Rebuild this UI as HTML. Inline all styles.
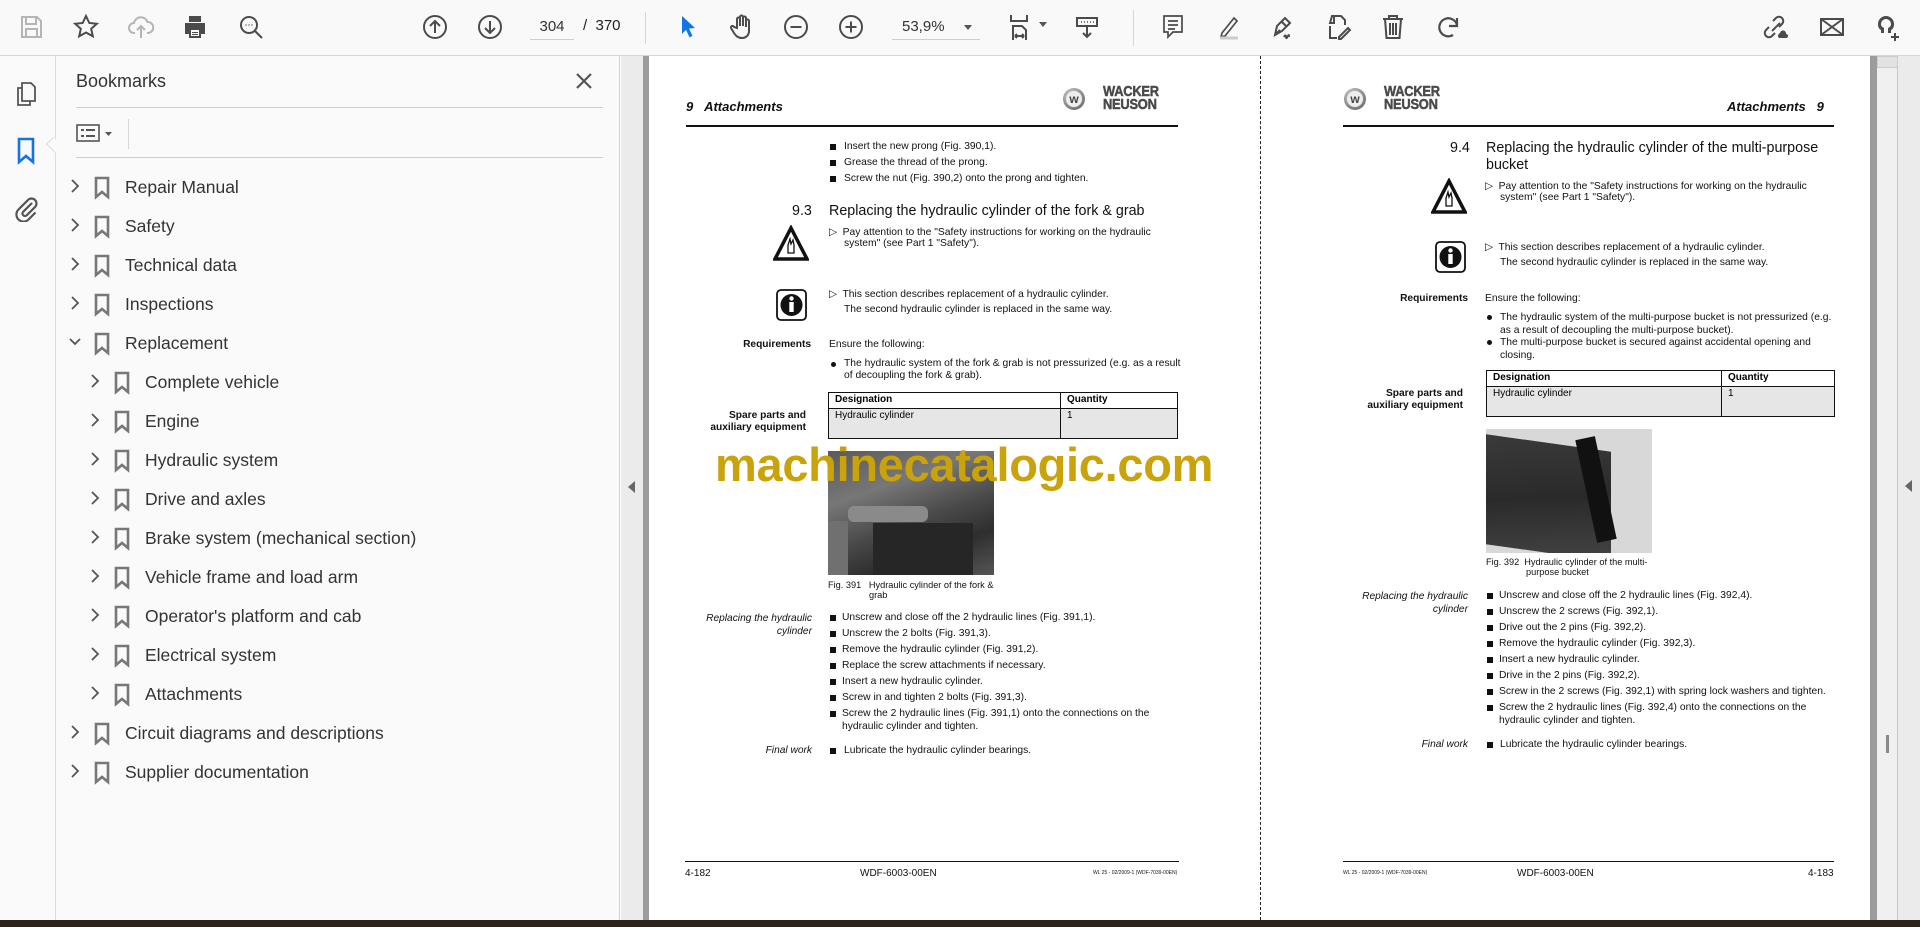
<!DOCTYPE html>
<html><head><meta charset="utf-8">
<style>
*{margin:0;padding:0;box-sizing:border-box}
body{width:1920px;height:927px;position:relative;overflow:hidden;background:#fff;font-family:"Liberation Sans",Arial,sans-serif}
.a{position:absolute}
#tb{left:0;top:0;width:1920px;height:56px;background:#f9f9f9;border-bottom:1px solid #d6d6d6}
.ic{position:absolute;top:13px;width:28px;height:28px}
.ic svg{width:28px;height:28px;fill:none;stroke:#4b4b4b;stroke-width:2}
#strip{left:0;top:56px;width:56px;height:864px;background:#fafafa;border-right:1px solid #dcdcdc}
#panel{left:56px;top:56px;width:564px;height:864px;background:#fafafa;border-right:1px solid #cfcfcf}
.bm{position:absolute;font-size:17.5px;color:#333;white-space:nowrap}
.bm .ch{position:absolute;left:-57px;top:2px}
.bm .bi{position:absolute;left:-32px;top:-1px}
.pg{font-size:10.3px;color:#111;white-space:nowrap;position:absolute}
.sq{position:absolute;width:6px;height:6px;background:#111}
.lbl{position:absolute;font-size:10.2px;font-weight:bold;text-align:right;white-space:nowrap;color:#111}
.it{position:absolute;font-size:10.2px;font-style:italic;text-align:right;white-space:nowrap;color:#111}
.h2{position:absolute;font-size:14.3px;color:#111;white-space:nowrap}
.logo{position:absolute;width:118px;height:30px}
.logo .c{position:absolute;left:0;top:2px;width:22px;height:22px;border-radius:50%;background:radial-gradient(circle at 40% 35%,#ddd,#777 70%,#555);}
.logo .c span{position:absolute;left:3px;top:3px;width:16px;height:16px;border-radius:50%;background:#eee;font:bold 12px "Liberation Sans";color:#444;text-align:center;line-height:16px}
.logo .t{position:absolute;left:40px;top:0;font:bold 15px/12.5px "Liberation Sans";color:#4a4a4a;transform:scaleX(0.86);transform-origin:left;letter-spacing:-0.3px;-webkit-text-stroke:0.5px #4a4a4a}
table{border-collapse:collapse;position:absolute;font-size:10px}
td{border:1.5px solid #111;padding:1px 6px;vertical-align:top}
</style></head><body>

<div id="tb" class="a">
 <div class="ic" style="left:17px"><svg viewBox="0 0 28 28" style="stroke:#b5b5b5"><path d="M5 4h15l4 4v16H5z M9 4v7h10V4 M9 24v-8h11v8"/></svg></div>
 <div class="ic" style="left:72px"><svg viewBox="0 0 28 28"><path d="M14 3l3.3 7 7.5.8-5.6 5 1.6 7.5L14 19.5 7.2 23.3 8.8 15.8 3.2 10.8l7.5-.8z"/></svg></div>
 <div class="ic" style="left:127px"><svg viewBox="0 0 28 28" style="stroke:#b5b5b5"><path d="M8 20H7a5 5 0 0 1 0-10 7 7 0 0 1 13.5-1A5 5 0 0 1 21 20h-1 M14 25V13 M10 17l4-4 4 4"/></svg></div>
 <div class="ic" style="left:181px"><svg viewBox="0 0 28 28" style="fill:#4b4b4b;stroke:none"><path d="M8 3h12v6H8z M4 10h20v11h-4v4H8v-4H4z"/><path d="M10 17h8v6h-8z" fill="#fff"/><path d="M11 19h6v1h-6zM11 21h6v1h-6z"/></svg></div>
 <div class="ic" style="left:237px"><svg viewBox="0 0 28 28"><circle cx="12" cy="12" r="8"/><path d="M18 18l7 7"/><path d="M8.5 12h1M11.5 12h1M14.5 12h1" stroke-width="1.6"/></svg></div>
 <div class="ic" style="left:421px"><svg viewBox="0 0 28 28"><circle cx="14" cy="14" r="11"/><path d="M14 20V8M9 13l5-5 5 5"/></svg></div>
 <div class="ic" style="left:476px"><svg viewBox="0 0 28 28"><circle cx="14" cy="14" r="11"/><path d="M14 8v12M9 15l5 5 5-5"/></svg></div>
 <div class="a" style="left:530px;top:16px;width:44px;height:24px;border-bottom:1px solid #cfcfcf;font-size:15px;color:#333;text-align:center;line-height:22px">304</div>
 <div class="a" style="left:583px;top:17px;font-size:15px;color:#222">/&nbsp; 370</div>
 <div class="a" style="left:645px;top:12px;width:1px;height:32px;background:#d6d6d6"></div>
 <div class="ic" style="left:674px"><svg viewBox="0 0 28 28" style="fill:#1473e6;stroke:none"><path d="M8 3l13 12-6 .5 3.5 7.5-3 1.3-3.5-7.5L8 21z"/></svg></div>
 <div class="ic" style="left:728px"><svg viewBox="0 0 28 28" stroke-width="1.7"><path d="M9 15V6a1.5 1.5 0 0 1 3 0v7V4a1.5 1.5 0 0 1 3 0v9V5a1.5 1.5 0 0 1 3 0v9V8a1.5 1.5 0 0 1 3 0v10c0 4-3 7-7 7s-6-2-8-5l-3-5a1.5 1.5 0 0 1 3-1z"/></svg></div>
 <div class="ic" style="left:782px"><svg viewBox="0 0 28 28"><circle cx="14" cy="14" r="11"/><path d="M8.5 14h11"/></svg></div>
 <div class="ic" style="left:837px"><svg viewBox="0 0 28 28"><circle cx="14" cy="14" r="11"/><path d="M8.5 14h11M14 8.5v11"/></svg></div>
 <div class="a" style="left:892px;top:16px;width:88px;height:24px;border-bottom:1px solid #cfcfcf;font-size:15px;color:#333;line-height:22px;padding-left:10px">53,9%</div>
 <div class="a" style="left:964px;top:25px;width:0;height:0;border-left:4px solid transparent;border-right:4px solid transparent;border-top:5px solid #555"></div>
 <div class="ic" style="left:1006px"><svg viewBox="0 0 28 28" stroke-width="1.7"><path d="M5 2v6h16V2 M7 27V13h9l4 4v10 M9 23h9M9 23l2-2M9 23l2 2M18 23l-2-2M18 23l-2 2"/></svg></div>
 <div class="a" style="left:1039px;top:22px;border-left:4px solid transparent;border-right:4px solid transparent;border-top:5px solid #555"></div>
 <div class="ic" style="left:1073px"><svg viewBox="0 0 28 28" stroke-width="1.7"><path d="M4 5h20v8H4z M14 14v10M10 20l4 4 4-4"/><path d="M8 9h1M11 9h1M14 9h1M17 9h1M20 9h1" stroke-width="1.4"/></svg></div>
 <div class="a" style="left:1133px;top:10px;width:1px;height:36px;background:#d6d6d6"></div>
 <div class="ic" style="left:1159px"><svg viewBox="0 0 28 28"><path d="M5 3h18v16h-9l-5 5v-5H5z M9 8h10M9 12h10M9 16h7" stroke-width="1.7"/></svg></div>
 <div class="ic" style="left:1214px"><svg viewBox="0 0 28 28"><path d="M8 20l12-15 3 3-12 15-4 1z" stroke-width="1.7"/><path d="M6 25h18" stroke="#ccc" stroke-width="3"/></svg></div>
 <div class="ic" style="left:1269px"><svg viewBox="0 0 28 28" stroke-width="1.7"><path d="M6 22l2-9 8-8 5 5-8 8z M6 22l5-5 M12 8l6 6 M15 24c1-2 2-2 2 0s1 1 2-1 1 0 2 0"/></svg></div>
 <div class="ic" style="left:1324px"><svg viewBox="0 0 28 28" stroke-width="1.7"><path d="M11 3h6l4 4v5 M6 13v12h7 M8 3h2v7H6z" /><path d="M15 24l9-9 2 2-9 9h-2z"/></svg></div>
 <div class="ic" style="left:1379px"><svg viewBox="0 0 28 28" stroke-width="1.7"><path d="M4 6h20M10 6V3h8v3M6 6l1.5 19h13L22 6M11 10v12M14 10v12M17 10v12"/></svg></div>
 <div class="ic" style="left:1435px"><svg viewBox="0 0 28 28"><path d="M18 22A9 9 0 1 1 22 12 M22 5v8h-8" stroke-width="2.2"/></svg></div>
 <div class="ic" style="left:1762px"><svg viewBox="0 0 28 28" stroke-width="1.8"><path d="M11 8l3-3a4 4 0 0 1 6 6l-3 3M13 20l-3 3a4 4 0 0 1-6-6l3-3M10 18l8-8"/><path d="M17 25a3 3 0 0 1 1-5 3 3 0 0 1 6 1 2 2 0 0 1 0 4z" fill="#4b4b4b" stroke="none"/></svg></div>
 <div class="ic" style="left:1818px"><svg viewBox="0 0 28 28" stroke-width="1.7"><path d="M3 6h22v16H3z M3 6l22 16M25 6L3 22"/></svg></div>
 <div class="ic" style="left:1872px"><svg viewBox="0 0 28 28" style="fill:#4b4b4b;stroke:none"><path d="M14 3a8 8 0 0 1 8 8c0 3-1 5-3 6v3h-3v-5c2-1 3-2 3-4a5 5 0 0 0-10 0c0 2 1 3 3 4v5H9v-3c-2-1-3-3-3-6a8 8 0 0 1 8-8z"/><path d="M22 20h2v3h3v2h-3v3h-2v-3h-3v-2h3z"/></svg></div>
</div>

<div id="strip" class="a">
 <svg class="a" style="left:14px;top:24px" width="24" height="28" viewBox="0 0 24 28" fill="none" stroke="#555" stroke-width="1.8"><path d="M8 3h9l4 4v14H8z M8 8H4v17h12v-4"/></svg>
 <svg class="a" style="left:16px;top:81px" width="20" height="28" viewBox="0 0 20 28" fill="none" stroke="#1473e6" stroke-width="2.6"><path d="M3 2h14v23l-7-6-7 6z"/></svg>
 <div class="a" style="left:46px;top:88px;width:10px;height:14px;background:#fafafa;border-left:1px solid #dcdcdc;border-top:1px solid #dcdcdc;transform:rotate(-45deg);transform-origin:0 0"></div>
 <svg class="a" style="left:12px;top:138px" width="28" height="28" viewBox="0 0 28 28" fill="none" stroke="#555" stroke-width="2.2"><path d="M20 9l-9 9a2.5 2.5 0 0 0 3.5 3.5l9-9a5 5 0 0 0-7-7l-10 10a7 7 0 0 0 10 10l7-7"/></svg>
</div>

<div id="panel" class="a">
 <div class="a" style="left:20px;top:15px;font-size:18px;color:#333">Bookmarks</div>
 <svg class="a" style="left:519px;top:16px" width="18" height="18" viewBox="0 0 18 18" stroke="#555" stroke-width="2.2"><path d="M2 2l14 14M16 2L2 16"/></svg>
 <div class="a" style="left:20px;top:51px;width:527px;height:1px;background:#cfcfcf"></div>
 <svg class="a" style="left:20px;top:67px" width="40" height="20" viewBox="0 0 40 20" fill="none" stroke="#555" stroke-width="1.6"><rect x="1" y="2" width="22" height="16"/><path d="M5 7h3M5 13h3M10 7h9M10 13h9" stroke-width="2"/><path d="M29 9h7l-3.5 4z" fill="#555" stroke="none"/></svg>
 <div class="a" style="left:72px;top:63px;width:1px;height:30px;background:#d6d6d6"></div>
 <div class="a" style="left:20px;top:101px;width:527px;height:1px;background:#cfcfcf"></div>
</div>

<div id="bms"></div>
<script>
var items=[["Repair Manual",0],["Safety",0],["Technical data",0],["Inspections",0],["Replacement",0,1],["Complete vehicle",1],["Engine",1],["Hydraulic system",1],["Drive and axles",1],["Brake system (mechanical section)",1],["Vehicle frame and load arm",1],["Operator's platform and cab",1],["Electrical system",1],["Attachments",1],["Circuit diagrams and descriptions",0],["Supplier documentation",0]];
var h="";
items.forEach(function(it,i){
 var x=it[1]?145:125, y=177+i*39;
 var ch=it[2]?'<svg class="ch" width="14" height="14" viewBox="0 0 14 14" fill="none" stroke="#555" stroke-width="1.8"><path d="M2 4l5 5 5-5"/></svg>':'<svg class="ch" width="14" height="14" viewBox="0 0 14 14" fill="none" stroke="#555" stroke-width="1.8"><path d="M4 1l6 6-6 6"/></svg>';
 h+='<div class="bm" style="left:'+x+'px;top:'+y+'px">'+ch+'<svg class="bi" width="18" height="24" viewBox="0 0 18 24" fill="none" stroke="#777" stroke-width="2.6"><path d="M3 2h12v19l-6-5-6 5z"/></svg>'+it[0].replace("'","&#39;")+'</div>';
});
document.getElementById("bms").innerHTML=h;
</script>

<!-- gutters -->
<div class="a" style="left:621px;top:56px;width:22px;height:864px;background:#ebebeb"></div>
<div class="a" style="left:643px;top:56px;width:6px;height:864px;background:#9c9c9c"></div>
<div class="a" style="left:628px;top:481px;border-top:6px solid transparent;border-bottom:6px solid transparent;border-right:7px solid #666"></div>
<div class="a" style="left:1870px;top:56px;width:7px;height:864px;background:#9c9c9c"></div>
<div class="a" style="left:1877px;top:56px;width:21px;height:864px;background:#f0f0f0;border-right:1px solid #c8c8c8"></div>
<div class="a" style="left:1877px;top:56px;width:21px;height:12px;background:#e2e2e2;border:1px solid #ccc"></div>
<div class="a" style="left:1886px;top:735px;width:3px;height:18px;background:#8a8a8a"></div>
<div class="a" style="left:1898px;top:56px;width:22px;height:864px;background:#ebebeb"></div>
<div class="a" style="left:1905px;top:480px;border-top:6px solid transparent;border-bottom:6px solid transparent;border-right:7px solid #666"></div>
<div class="a" style="left:1260px;top:56px;width:0;height:864px;border-left:1px dashed #222"></div>
<div class="a" style="left:0;top:920px;width:1920px;height:7px;background:#2b231d"></div>

<!-- LEFT PAGE -->
<div class="a" style="left:686px;top:99px;font-size:13px;font-weight:bold;font-style:italic;color:#111">9&nbsp;&nbsp;&nbsp;Attachments</div>
<div class="logo" style="left:1063px;top:86px"><div class="c"><span>w</span></div><div class="t">WACKER<br>NEUSON</div></div>
<div class="a" style="left:686px;top:125px;width:492px;height:1.5px;background:#111"></div>
<div class="sq" style="left:830px;top:144px"></div><div class="pg" style="left:844px;top:141px">Insert the new prong (Fig. 390,1).</div>
<div class="sq" style="left:830px;top:160px"></div><div class="pg" style="left:844px;top:157px">Grease the thread of the prong.</div>
<div class="sq" style="left:830px;top:176px"></div><div class="pg" style="left:844px;top:173px">Screw the nut (Fig. 390,2) onto the prong and tighten.</div>
<div class="h2" style="left:792px;top:203px">9.3</div>
<div class="h2" style="left:829px;top:203px">Replacing the hydraulic cylinder of the fork &amp; grab</div>
<svg class="a" style="left:773px;top:225px" width="36" height="36" viewBox="0 0 36 36"><path d="M18 3L34 34H2z" fill="#fff" stroke="#111" stroke-width="3.5"/><path d="M15 28v-8l2-6 1 5 2-4 1 5v8z" fill="none" stroke="#111" stroke-width="1.3"/></svg>
<div class="pg" style="left:829px;top:226px">▷&nbsp; Pay attention to the "Safety instructions for working on the hydraulic</div>
<div class="pg" style="left:844px;top:238px">system" (see Part 1 "Safety").</div>
<svg class="a" style="left:776px;top:289px" width="31" height="32" viewBox="0 0 31 32"><rect x="1" y="1" width="29" height="30" rx="4" fill="#fff" stroke="#111" stroke-width="1.8"/><circle cx="15.5" cy="16" r="11" fill="#111"/><rect x="13.3" y="13" width="4.4" height="10" fill="#fff"/><circle cx="15.5" cy="9.5" r="2.2" fill="#fff"/></svg>
<div class="pg" style="left:829px;top:288px">▷&nbsp; This section describes replacement of a hydraulic cylinder.</div>
<div class="pg" style="left:844px;top:304px">The second hydraulic cylinder is replaced in the same way.</div>
<div class="lbl" style="right:1109px;top:339px">Requirements</div>
<div class="pg" style="left:829px;top:339px">Ensure the following:</div>
<div class="a" style="left:831px;top:362px;width:5px;height:5px;border-radius:50%;background:#111"></div>
<div class="pg" style="left:844px;top:358px">The hydraulic system of the fork &amp; grab is not pressurized (e.g. as a result</div>
<div class="pg" style="left:844px;top:370px">of decoupling the fork &amp; grab).</div>
<table style="left:828px;top:392px;width:350px"><tr><td style="width:232px;font-weight:bold;height:16px">Designation</td><td style="font-weight:bold">Quantity</td></tr><tr style="background:#e6e6e6"><td style="height:30px">Hydraulic cylinder</td><td>1</td></tr></table>
<div class="lbl" style="right:1114px;top:410px;line-height:12px">Spare parts and<br>auxiliary equipment</div>
<div class="a" style="left:828px;top:451px;width:166px;height:124px;background:linear-gradient(160deg,#5a5a5a,#777 30%,#4a4a4a 55%,#2e2e2e 75%,#555);overflow:hidden">
 <div class="a" style="left:20px;top:55px;width:80px;height:16px;background:#8a8a8a;border-radius:6px"></div>
 <div class="a" style="left:45px;top:72px;width:100px;height:52px;background:#262626"></div>
 <div class="a" style="left:0;top:70px;width:20px;height:54px;background:#707070"></div>
</div>
<div class="pg" style="left:828px;top:580px;font-size:9.2px;line-height:10px">Fig. 391&nbsp;&nbsp; Hydraulic cylinder of the fork &amp;<br><span style="padding-left:41px">grab</span></div>
<div class="it" style="right:1108px;top:612px;line-height:13px">Replacing the hydraulic<br>cylinder</div>
<div id="l1"></div>
<div class="it" style="right:1108px;top:745px">Final work</div>
<div class="sq" style="left:830px;top:748px"></div><div class="pg" style="left:844px;top:745px">Lubricate the hydraulic cylinder bearings.</div>
<div class="a" style="left:685px;top:861px;width:494px;height:1.3px;background:#111"></div>
<div class="pg" style="left:685px;top:868px;font-size:10px">4-182</div>
<div class="pg" style="left:860px;top:868px;font-size:10px">WDF-6003-00EN</div>
<div class="pg" style="left:1093px;top:870px;font-size:5px">WL 25 - 02/2009-1 (WDF-7039-00EN)</div>

<!-- RIGHT PAGE -->
<div class="logo" style="left:1344px;top:86px"><div class="c"><span>w</span></div><div class="t">WACKER<br>NEUSON</div></div>
<div class="a" style="left:1727px;top:99px;font-size:13px;font-weight:bold;font-style:italic;color:#111">Attachments&nbsp;&nbsp;&nbsp;9</div>
<div class="a" style="left:1343px;top:125px;width:491px;height:1.5px;background:#111"></div>
<div class="h2" style="left:1450px;top:140px">9.4</div>
<div class="h2" style="left:1486px;top:140px;line-height:17px">Replacing the hydraulic cylinder of the multi-purpose<br>bucket</div>
<svg class="a" style="left:1431px;top:178px" width="36" height="36" viewBox="0 0 36 36"><path d="M18 3L34 34H2z" fill="#fff" stroke="#111" stroke-width="3.5"/><path d="M15 28v-8l2-6 1 5 2-4 1 5v8z" fill="none" stroke="#111" stroke-width="1.3"/></svg>
<div class="pg" style="left:1485px;top:180px">▷&nbsp; Pay attention to the "Safety instructions for working on the hydraulic</div>
<div class="pg" style="left:1500px;top:192px">system" (see Part 1 "Safety").</div>
<svg class="a" style="left:1435px;top:241px" width="31" height="32" viewBox="0 0 31 32"><rect x="1" y="1" width="29" height="30" rx="4" fill="#fff" stroke="#111" stroke-width="1.8"/><circle cx="15.5" cy="16" r="11" fill="#111"/><rect x="13.3" y="13" width="4.4" height="10" fill="#fff"/><circle cx="15.5" cy="9.5" r="2.2" fill="#fff"/></svg>
<div class="pg" style="left:1485px;top:241px">▷&nbsp; This section describes replacement of a hydraulic cylinder.</div>
<div class="pg" style="left:1500px;top:257px">The second hydraulic cylinder is replaced in the same way.</div>
<div class="lbl" style="right:452px;top:293px">Requirements</div>
<div class="pg" style="left:1485px;top:293px">Ensure the following:</div>
<div class="a" style="left:1487px;top:315px;width:5px;height:5px;border-radius:50%;background:#111"></div>
<div class="pg" style="left:1500px;top:312px">The hydraulic system of the multi-purpose bucket is not pressurized (e.g.</div>
<div class="pg" style="left:1500px;top:325px">as a result of decoupling the multi-purpose bucket).</div>
<div class="a" style="left:1487px;top:340px;width:5px;height:5px;border-radius:50%;background:#111"></div>
<div class="pg" style="left:1500px;top:337px">The multi-purpose bucket is secured against accidental opening and</div>
<div class="pg" style="left:1500px;top:350px">closing.</div>
<table style="left:1486px;top:370px;width:349px"><tr><td style="width:235px;font-weight:bold;height:16px">Designation</td><td style="font-weight:bold">Quantity</td></tr><tr style="background:#e6e6e6"><td style="height:30px">Hydraulic cylinder</td><td>1</td></tr></table>
<div class="lbl" style="right:457px;top:388px;line-height:12px">Spare parts and<br>auxiliary equipment</div>
<div class="a" style="left:1486px;top:429px;width:166px;height:124px;background:#d8d8d8;overflow:hidden">
 <div class="a" style="left:0;top:14px;width:125px;height:110px;background:linear-gradient(170deg,#3a3a3a,#2a2a2a 50%,#444);transform:skewY(8deg)"></div>
 <div class="a" style="left:100px;top:8px;width:20px;height:105px;background:#111;transform:rotate(-12deg)"></div>
</div>
<div class="pg" style="left:1486px;top:557px;font-size:9.2px;line-height:10px">Fig. 392&nbsp; Hydraulic cylinder of the multi-<br><span style="padding-left:40px">purpose bucket</span></div>
<div class="it" style="right:452px;top:590px;line-height:13px">Replacing the hydraulic<br>cylinder</div>
<div id="l2"></div>
<div class="it" style="right:452px;top:739px">Final work</div>
<div class="sq" style="left:1487px;top:742px"></div><div class="pg" style="left:1500px;top:739px">Lubricate the hydraulic cylinder bearings.</div>
<div class="a" style="left:1343px;top:861px;width:491px;height:1.3px;background:#111"></div>
<div class="pg" style="left:1343px;top:870px;font-size:5px">WL 25 - 02/2009-1 (WDF-7039-00EN)</div>
<div class="pg" style="left:1517px;top:868px;font-size:10px">WDF-6003-00EN</div>
<div class="pg" style="left:1808px;top:868px;font-size:10px">4-183</div>

<script>
function list(id,x,ys,arr){var h="";arr.forEach(function(t,i){if(t[0]!="~")h+='<div class="sq" style="left:'+(x+2)+'px;top:'+(ys[i]+3)+'px"></div>';h+='<div class="pg" style="left:'+(x+14)+'px;top:'+ys[i]+'px">'+t.replace("~","")+'</div>';});document.getElementById(id).innerHTML=h;}
list("l1",828,[612,628,644,660,676,692,708,721],["Unscrew and close off the 2 hydraulic lines (Fig. 391,1).","Unscrew the 2 bolts (Fig. 391,3).","Remove the hydraulic cylinder (Fig. 391,2).","Replace the screw attachments if necessary.","Insert a new hydraulic cylinder.","Screw in and tighten 2 bolts (Fig. 391,3).","Screw the 2 hydraulic lines (Fig. 391,1) onto the connections on the","~hydraulic cylinder and tighten."]);
list("l2",1485,[590,606,622,638,654,670,686,702,715],["Unscrew and close off the 2 hydraulic lines (Fig. 392,4).","Unscrew the 2 screws (Fig. 392,1).","Drive out the 2 pins (Fig. 392,2).","Remove the hydraulic cylinder (Fig. 392,3).","Insert a new hydraulic cylinder.","Drive in the 2 pins (Fig. 392,2).","Screw in the 2 screws (Fig. 392,1) with spring lock washers and tighten.","Screw the 2 hydraulic lines (Fig. 392,4) onto the connections on the","~hydraulic cylinder and tighten."]);
</script>

<div class="a" style="left:715px;top:437px;font-size:47px;font-weight:bold;color:#c9a20c;white-space:nowrap;transform:scaleX(1.0);transform-origin:left;letter-spacing:-0.3px">machinecatalogic.com</div>
</body></html>
